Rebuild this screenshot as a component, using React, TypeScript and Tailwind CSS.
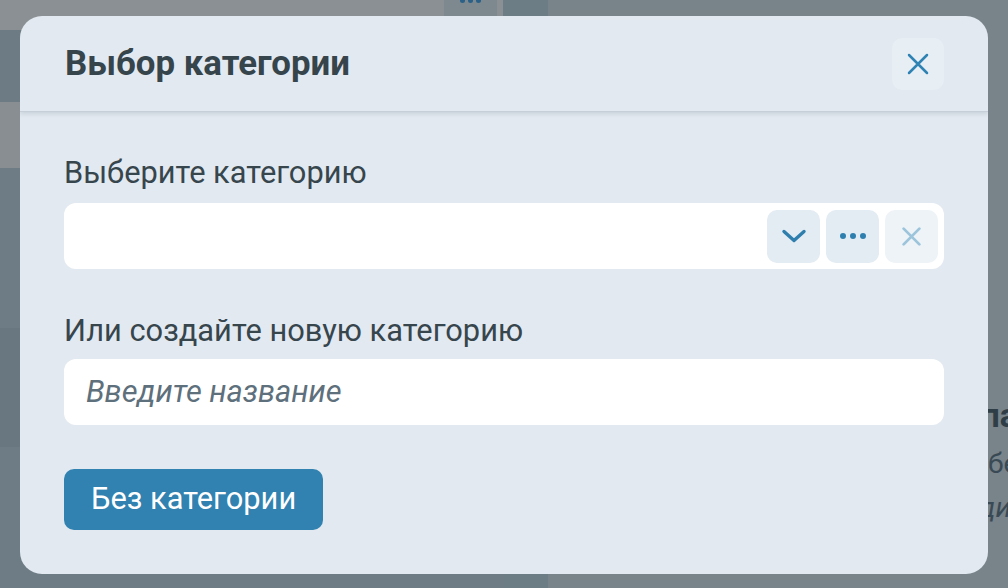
import React from "react";

function XIcon({ className, strokeWidth = 2.4 }: { className?: string; strokeWidth?: number }) {
  return (
    <svg viewBox="0 0 24 24" className={className} fill="none" stroke="currentColor" strokeWidth={strokeWidth} strokeLinecap="round">
      <path d="M3 3L21 21M21 3L3 21" />
    </svg>
  );
}

export default function App() {
  return (
    <div className="relative w-full h-[588px] overflow-hidden bg-[#78838a] font-['Roboto',sans-serif]">
      {/* dimmed page behind */}
      <div className="flex h-full">
        <div className="w-[503px] shrink-0 flex flex-col">
          <div className="h-[30px] shrink-0 bg-[#8a9093] flex justify-end pr-[6px]">
            <div className="w-[53px] h-[30px] bg-[#7e898f] flex justify-center gap-[3px]">
              <span className="w-[5px] h-[5px] -mt-[2px] rounded-full bg-[#2b6188]" />
              <span className="w-[5px] h-[5px] -mt-[2px] rounded-full bg-[#2b6188]" />
              <span className="w-[5px] h-[5px] -mt-[2px] rounded-full bg-[#2b6188]" />
            </div>
          </div>
          <div className="h-[72px] shrink-0 bg-[#6c7b84]" />
          <div className="h-[66px] shrink-0 bg-[#888e91]" />
          <div className="h-[160px] shrink-0 bg-[#6d7c85]" />
          <div className="h-[119px] shrink-0 bg-[#697880]" />
          <div className="flex-1 bg-[#6e7c85]" />
        </div>
        <div className="w-[45px] shrink-0 bg-[#6c7d86]" />
        <div className="flex-1 min-w-0 pt-[398px] flex flex-col text-[#3a4a55] whitespace-nowrap">
          <div className="ml-[433px] text-[33px] font-bold leading-[36px] text-[#2f3d46]">папка</div>
          <div className="ml-[424px] text-[28px] leading-[32px] mt-[14px]">обе</div>
          <div className="ml-[431px] text-[28px] leading-[32px] mt-[12px] italic">ди</div>
        </div>
      </div>

      {/* modal */}
      <div className="absolute left-[20px] top-[16px] w-[968px] h-[558px] rounded-[22px] bg-[#e2e9f0] flex flex-col overflow-hidden">
        <div className="h-[96px] shrink-0 flex items-center justify-between pl-[45px] pr-[44px] border-b border-[#c6cfd8] shadow-[0_2px_4px_rgba(60,80,100,0.15)]">
          <h2 className="text-[34.8px] font-bold text-[#36444c] leading-none">Выбор категории</h2>
          <button className="w-[52px] h-[52px] rounded-[10px] bg-[#e7eef4] flex items-center justify-center text-[#2f83b3]">
            <XIcon className="w-[24px] h-[24px]" strokeWidth={2.5} />
          </button>
        </div>
        <div className="flex flex-col px-[44px] pt-[43px]">
          <label className="text-[30.8px] text-[#37454d] leading-[36px]">Выберите категорию</label>
          <div className="mt-[12px] h-[66px] bg-white rounded-[12px] flex items-center justify-end gap-[6px] pr-[6px]">
            <button className="w-[53px] h-[53px] rounded-[10px] bg-[#e3ecf3] flex items-center justify-center text-[#2f7fae]">
              <svg viewBox="0 0 28 28" className="w-[28px] h-[28px]" fill="none" stroke="currentColor" strokeWidth={3.4} strokeLinecap="round" strokeLinejoin="round">
                <path d="M4 9.5L14 18.5L24 9.5" />
              </svg>
            </button>
            <button className="w-[53px] h-[53px] rounded-[10px] bg-[#e3ecf3] flex items-center justify-center gap-[4px]">
              <span className="w-[6px] h-[6px] rounded-full bg-[#2f7fae]" />
              <span className="w-[6px] h-[6px] rounded-full bg-[#2f7fae]" />
              <span className="w-[6px] h-[6px] rounded-full bg-[#2f7fae]" />
            </button>
            <button className="w-[53px] h-[53px] rounded-[10px] bg-[#eef3f7] flex items-center justify-center text-[#9cc4da]">
              <XIcon className="w-[21px] h-[21px]" strokeWidth={3.2} />
            </button>
          </div>
          <label className="mt-[44px] text-[30.8px] text-[#37454d] leading-[36px]">Или создайте новую категорию</label>
          <div className="mt-[10px] h-[66px] bg-white rounded-[12px] flex items-center pl-[22px]">
            <span className="text-[30.8px] italic text-[#5d707c]">Введите название</span>
          </div>
          <div className="mt-[44px]">
            <button className="h-[61px] px-[27px] rounded-[10px] bg-[#3182b0] text-white text-[30.8px]">Без категории</button>
          </div>
        </div>
      </div>
    </div>
  );
}
